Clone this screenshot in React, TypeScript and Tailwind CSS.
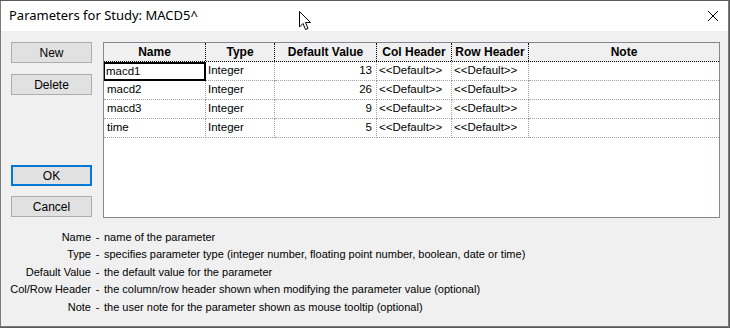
import React from "react";

const rows = [
  { name: "macd1", value: "13" },
  { name: "macd2", value: "26" },
  { name: "macd3", value: "9" },
  { name: "time", value: "5" },
];

const notes = [
  ["Name", "name of the parameter"],
  ["Type", "specifies parameter type (integer number, floating point number, boolean, date or time)"],
  ["Default Value", "the default value for the parameter"],
  ["Col/Row Header", "the column/row header shown when modifying the parameter value (optional)"],
  ["Note", "the user note for the parameter shown as mouse tooltip (optional)"],
];

const cols = "grid grid-cols-[102px_69px_102px_75px_77px_1fr]";

function Button({ label, focused }: { label: string; focused?: boolean }) {
  return (
    <div
      className={
        "h-[21px] w-[81px] flex items-center justify-center bg-[#e1e1e1] text-[12px] text-black " +
        (focused ? "border-2 border-[#0078d7]" : "border border-[#adadad]")
      }
    >
      {label}
    </div>
  );
}

function Cell({ children, last, right }: { children?: React.ReactNode; last?: boolean; right?: boolean }) {
  return (
    <div
      className={
        "h-[19px] flex items-center whitespace-nowrap border-b border-dotted border-b-[#a0a0a0] " +
        (last ? "" : "border-r border-r-[#a0a0a0] ") +
        (right ? "justify-end pr-[4px]" : "pl-[2px]")
      }
    >
      {children}
    </div>
  );
}

export default function App() {
  return (
    <div className="w-[730px] h-[328px] bg-[#5a5a5a] pt-px pr-px pb-px" style={{ fontFamily: '"Liberation Sans", Arial, sans-serif' }}>
      <div className="relative h-full flex flex-col border-x border-b border-[#7a7a7a]">
        {/* title bar */}
        <div className="h-[30px] bg-white flex items-center justify-between pl-[8px] pr-[9px]">
          <span className="text-[13px] text-black" style={{ fontFamily: '"Noto Sans", "Open Sans", sans-serif' }}>
            Parameters for Study: MACD5^
          </span>
          <svg width="12" height="12" viewBox="0 0 12 12">
            <path d="M1 1 L11 11 M11 1 L1 11" stroke="#000" strokeWidth="1" />
          </svg>
        </div>

        {/* mouse cursor */}
        <svg className="absolute left-[298px] top-[10px]" width="14" height="20" viewBox="0 0 14 20">
          <path d="M0.5 0.5 L0.5 16 L4 12.5 L6.5 18.5 L9 17.5 L6.5 11.5 L11.5 11.5 Z" fill="#fff" stroke="#000" strokeWidth="1" />
        </svg>

        <div className="flex-1 bg-[#f0f0f0] flex flex-col pl-[10px] pr-[8px] pt-[11px]">
          <div className="flex gap-[11px]">
            <div className="flex flex-col w-[81px]">
              <Button label="New" />
              <div className="h-[11px]" />
              <Button label="Delete" />
              <div className="h-[70px]" />
              <Button label="OK" focused />
              <div className="h-[10px]" />
              <Button label="Cancel" />
            </div>

            <div className="w-[617px] h-[176px] bg-white border border-[#828790] text-[11.5px] text-black">
              <div className={cols + " bg-[#f0f0f0] border-b border-dotted border-b-black font-bold text-[12px]"}>
                {["Name", "Type", "Default Value", "Col Header", "Row Header", "Note"].map((h, i) => (
                  <div
                    key={h}
                    className={"h-[18px] flex items-center justify-center whitespace-nowrap " + (i < 5 ? "border-r border-dotted border-r-black" : "")}
                  >
                    {h}
                  </div>
                ))}
              </div>
              {rows.map((r, i) => (
                <div key={r.name} className={cols + " bg-white"}>
                  {i === 0 ? (
                    <div className="h-[19px] flex items-center pl-px border-2 border-black border-l">{r.name}</div>
                  ) : (
                    <Cell>
                      <span className="pl-px">{r.name}</span>
                    </Cell>
                  )}
                  <Cell>Integer</Cell>
                  <Cell right>{r.value}</Cell>
                  <Cell>&lt;&lt;Default&gt;&gt;</Cell>
                  <Cell>&lt;&lt;Default&gt;&gt;</Cell>
                  <Cell last />
                </div>
              ))}
            </div>
          </div>

          <div className="mt-[10px] flex flex-col text-[11px] text-black">
            {notes.map(([k, v]) => (
              <div key={k} className="h-[17.6px] flex items-center whitespace-nowrap">
                <span className="w-[80px] flex justify-end">{k}</span>
                <span className="w-[13px] text-center">-</span>
                <span>{v}</span>
              </div>
            ))}
          </div>
        </div>
      </div>
    </div>
  );
}
